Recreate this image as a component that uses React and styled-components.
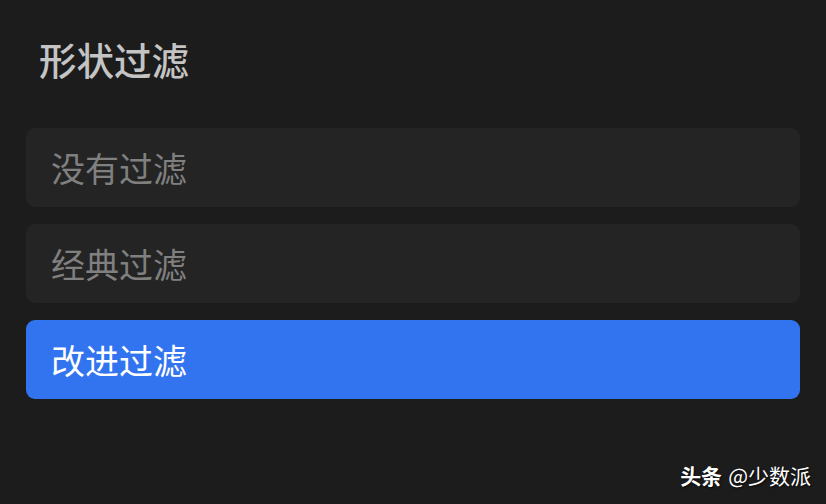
import React from 'react'
import styled, { createGlobalStyle } from 'styled-components'

const Global = createGlobalStyle`
    html, body {
        margin: 0;
        padding: 0;
        background: #1c1c1c;
    }
    body {
        font-family: "Noto Sans CJK SC", "Noto Sans", sans-serif;
    }
`

const Page = styled.div`
    position: relative;
    width: 826px;
    height: 504px;
    box-sizing: border-box;
    padding: 33px 26px 0 26px;
    background: #1c1c1c;
`

const Title = styled.h1`
    margin: 0 0 0 13px;
    font-size: 37.5px;
    line-height: 52px;
    font-weight: 500;
    color: #c4c4c4;
`

const List = styled.div`
    display: flex;
    flex-direction: column;
    gap: 17px;
    margin-top: 43px;
`

const Option = styled.div`
    height: 79px;
    border-radius: 9px;
    display: flex;
    align-items: center;
    padding-left: 25px;
    font-size: 34px;
    background: ${p => (p.$active ? '#3274ef' : '#242424')};
    color: ${p => (p.$active ? '#ffffff' : '#808080')};
`

const Mark = styled.div`
    position: absolute;
    right: 15px;
    bottom: 14px;
    font-size: 21px;
    color: #ffffff;
    text-shadow: 1px 1px 2px rgba(0, 0, 0, 0.8);
    display: flex;
    gap: 6px;
`

const Strong = styled.span`
    font-weight: 700;
`

const options = ['没有过滤', '经典过滤', '改进过滤']

const App = () => {
  return (
    <Page>
        <Global />
        <Title>形状过滤</Title>
        <List>
            {options.map((o, i) => (
                <Option key={o} $active={i === 2}>{o}</Option>
            ))}
        </List>
        <Mark>
            <Strong>头条</Strong>
            <span>@少数派</span>
        </Mark>
    </Page>
  )
}

export default App
